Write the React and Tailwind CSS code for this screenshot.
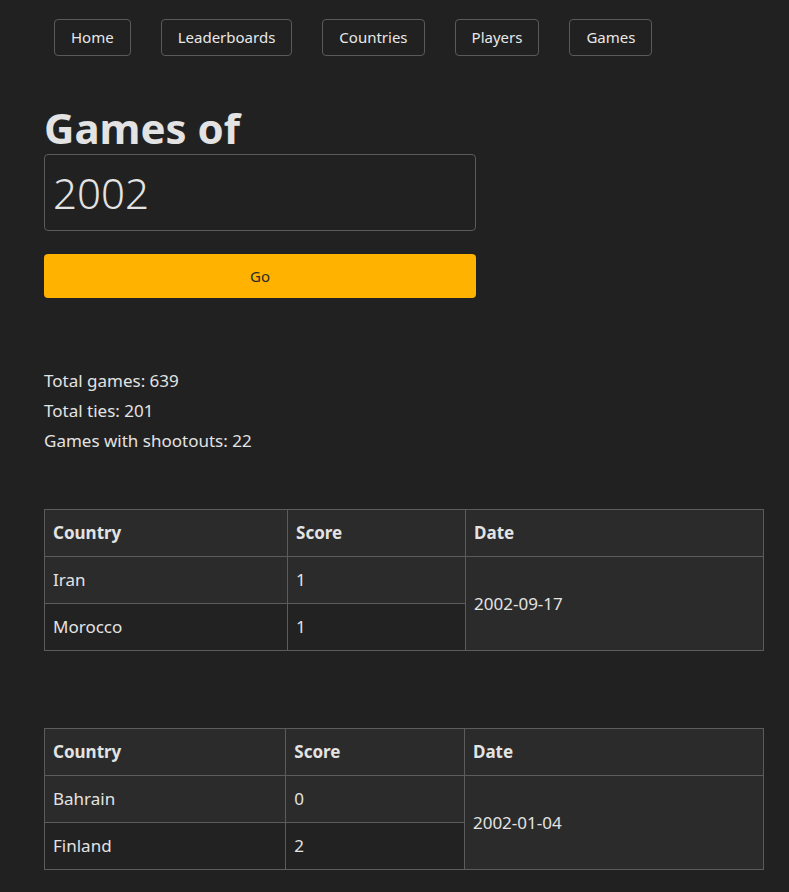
const navItems = ["Home", "Leaderboards", "Countries", "Players", "Games"];

const games = [
  { date: "2002-09-17", teams: [["Iran", 1], ["Morocco", 1]] },
  { date: "2002-01-04", teams: [["Bahrain", 0], ["Finland", 2]] },
];

function GameTable({ game }) {
  return (
    <table className="w-[720px] border-collapse text-[17px] text-[#e3e3e3]">
      <thead>
        <tr className="bg-[#2b2b2b]">
          <th className="border border-[#5c5c5c] px-2 h-[47px] text-left font-bold">Country</th>
          <th className="border border-[#5c5c5c] px-2 h-[47px] text-left font-bold">Score</th>
          <th className="border border-[#5c5c5c] px-2 h-[47px] text-left font-bold">Date</th>
        </tr>
      </thead>
      <tbody>
        {game.teams.map(([country, score], idx) => (
          <tr key={country} className={idx === 0 ? "bg-[#2b2b2b]" : "bg-[#222222]"}>
            <td className="border border-[#5c5c5c] px-2 h-[47px]">{country}</td>
            <td className="border border-[#5c5c5c] px-2 h-[47px]">{score}</td>
            {idx === 0 && (
              <td rowSpan={2} className="border border-[#5c5c5c] px-2 bg-[#2b2b2b]">
                {game.date}
              </td>
            )}
          </tr>
        ))}
      </tbody>
    </table>
  );
}

export default function App() {
  return (
    <div className="min-h-screen bg-[#212121] text-[#e3e3e3] font-['Noto_Sans',sans-serif]">
      <nav className="flex gap-[30px] pl-[54px] pt-[19px]">
        {navItems.map((item) => (
          <button
            key={item}
            className="h-[37px] px-4 border border-[#5a5a5a] rounded text-[15px] text-[#e8e8e8]"
          >
            {item}
          </button>
        ))}
      </nav>

      <div className="px-[44px]">
        <h1 className="mt-[46px] text-[42px] font-bold leading-[52px] text-[#e3e3e3]">Games of</h1>
        <div className="w-[432px] h-[77px] border border-[#5a5a5a] rounded flex items-center px-2 text-[42px] font-light">
          2002
        </div>
        <button className="mt-[23px] w-[432px] h-[44px] rounded bg-[#ffb300] text-[15px] text-[#2a2a2a]">
          Go
        </button>

        <div className="mt-[68px] flex flex-col text-[17px] leading-[30px]">
          <p>Total games: 639</p>
          <p>Total ties: 201</p>
          <p>Games with shootouts: 22</p>
        </div>

        <div className="mt-[53px] flex flex-col gap-[77px] pb-[23px]">
          {games.map((game) => (
            <GameTable key={game.date} game={game} />
          ))}
        </div>
      </div>
    </div>
  );
}
